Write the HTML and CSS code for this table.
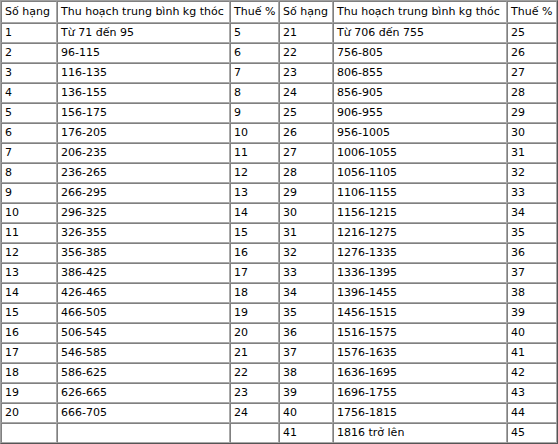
FILE: index.html
```html
<!DOCTYPE html>
<html lang="vi">
<head>
<meta charset="utf-8">
<title>Bảng thuế</title>
<link rel="stylesheet" href="styles.css">
</head>
<body>
<table class="tax">
<colgroup>
<col class="c-no"><col class="c-range"><col class="c-rate">
<col class="c-no2"><col class="c-range2"><col class="c-rate2">
</colgroup>
<tbody>
<tr class="head"><td>Số hạng</td><td>Thu hoạch trung bình kg thóc</td><td>Thuế %</td><td>Số hạng</td><td>Thu hoạch trung bình kg thóc</td><td>Thuế %</td></tr>
<tr><td>1</td><td>Từ 71 đến 95</td><td>5</td><td>21</td><td>Từ 706 đến 755</td><td>25</td></tr>
<tr><td>2</td><td>96-115</td><td>6</td><td>22</td><td>756-805</td><td>26</td></tr>
<tr><td>3</td><td>116-135</td><td>7</td><td>23</td><td>806-855</td><td>27</td></tr>
<tr><td>4</td><td>136-155</td><td>8</td><td>24</td><td>856-905</td><td>28</td></tr>
<tr><td>5</td><td>156-175</td><td>9</td><td>25</td><td>906-955</td><td>29</td></tr>
<tr><td>6</td><td>176-205</td><td>10</td><td>26</td><td>956-1005</td><td>30</td></tr>
<tr><td>7</td><td>206-235</td><td>11</td><td>27</td><td>1006-1055</td><td>31</td></tr>
<tr><td>8</td><td>236-265</td><td>12</td><td>28</td><td>1056-1105</td><td>32</td></tr>
<tr><td>9</td><td>266-295</td><td>13</td><td>29</td><td>1106-1155</td><td>33</td></tr>
<tr><td>10</td><td>296-325</td><td>14</td><td>30</td><td>1156-1215</td><td>34</td></tr>
<tr><td>11</td><td>326-355</td><td>15</td><td>31</td><td>1216-1275</td><td>35</td></tr>
<tr><td>12</td><td>356-385</td><td>16</td><td>32</td><td>1276-1335</td><td>36</td></tr>
<tr><td>13</td><td>386-425</td><td>17</td><td>33</td><td>1336-1395</td><td>37</td></tr>
<tr><td>14</td><td>426-465</td><td>18</td><td>34</td><td>1396-1455</td><td>38</td></tr>
<tr><td>15</td><td>466-505</td><td>19</td><td>35</td><td>1456-1515</td><td>39</td></tr>
<tr><td>16</td><td>506-545</td><td>20</td><td>36</td><td>1516-1575</td><td>40</td></tr>
<tr><td>17</td><td>546-585</td><td>21</td><td>37</td><td>1576-1635</td><td>41</td></tr>
<tr><td>18</td><td>586-625</td><td>22</td><td>38</td><td>1636-1695</td><td>42</td></tr>
<tr><td>19</td><td>626-665</td><td>23</td><td>39</td><td>1696-1755</td><td>43</td></tr>
<tr><td>20</td><td>666-705</td><td>24</td><td>40</td><td>1756-1815</td><td>44</td></tr>
<tr><td></td><td></td><td></td><td>41</td><td>1816 trở lên</td><td>45</td></tr>
</tbody>
</table>
</body>
</html>
```
FILE: styles.css
```css
html, body {
  margin: 0;
  padding: 0;
  background: #ffffff;
}

.tax {
  width: 558px;
  table-layout: fixed;
  border-collapse: separate;
  border-spacing: 0;
  border-style: solid;
  border-width: 1px;
  border-color: #a0a0a0 #555555 #555555 #a0a0a0;
  font-family: "DejaVu Sans", Verdana, sans-serif;
  font-size: 11px;
  color: #000000;
}

.c-no { width: 56px; }
.c-range { width: 173px; }
.c-rate { width: 49px; }
.c-no2 { width: 54px; }
.c-range2 { width: 174px; }
.c-rate2 { width: 50px; }

.tax td {
  height: 20px;
  padding: 0 2px 0 3px;
  box-sizing: border-box;
  border-style: solid;
  border-width: 1px;
  border-color: #808080 #a8a8a8 #a8a8a8 #808080;
  line-height: 14px;
  vertical-align: middle;
  white-space: nowrap;
  overflow: hidden;
}

.tax .head td {
  height: 22px;
}
```
